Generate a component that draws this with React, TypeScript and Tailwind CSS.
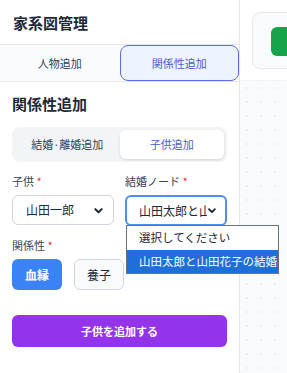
import React from "react";

const Chevron = () => (
  <svg width="11" height="11" viewBox="0 0 24 24" fill="none" stroke="#1f2937" strokeWidth="4.5" strokeLinecap="round" strokeLinejoin="round">
    <path d="M5 9l7 7 7-7" />
  </svg>
);

export default function App() {
  return (
    <div
      className="flex h-[373px] w-[287px] overflow-hidden bg-white text-gray-800"
      style={{ fontFamily: '"Noto Sans CJK JP", "Noto Sans", sans-serif' }}
    >
      <aside className="relative flex w-[240px] shrink-0 flex-col border-r border-gray-200 bg-white">
        <div className="flex h-[45px] items-center border-b border-gray-200 px-[13px]">
          <h1 className="text-[15px] font-semibold leading-none text-gray-800">家系図管理</h1>
        </div>
        <div className="grid h-[37px] grid-cols-2 border-b border-gray-200">
          <div className="flex items-center justify-center bg-gray-50 text-[11px] text-gray-700">人物追加</div>
          <div className="flex items-center justify-center rounded-lg border border-[#5b6be3] bg-[#eef4ff] text-[11px] text-[#4c5bd4]">
            関係性追加
          </div>
        </div>
        <div className="px-3">
          <h2 className="mt-[12px] text-[15px] font-semibold leading-[20px] text-gray-800">関係性追加</h2>
          <div className="mt-[13px] grid h-[35px] grid-cols-2 rounded-lg bg-gray-100 p-[3px]">
            <div className="flex items-center justify-center text-[11px] text-gray-700">結婚·離婚追加</div>
            <div className="flex items-center justify-center rounded-md bg-white text-[11px] text-[#4c5bd4] shadow-sm">
              子供追加
            </div>
          </div>
          <div className="mt-[12px] grid grid-cols-2 gap-[11px]">
            <div>
              <div className="text-[11px] leading-[14px] text-gray-700">
                子供 <span className="text-red-500">*</span>
              </div>
              <div className="mt-[7px] flex h-[30px] items-center justify-between rounded-md border border-gray-300 bg-white pl-[13px] pr-[9px] text-[12px] text-gray-800">
                <span>山田一郎</span>
                <Chevron />
              </div>
            </div>
            <div className="relative">
              <div className="text-[11px] leading-[14px] text-gray-700">
                結婚ノード <span className="text-red-500">*</span>
              </div>
              <div className="mt-[7px] flex h-[31px] items-center justify-between rounded-md border-2 border-[#4d8ef5] bg-white pl-[12px] pr-[8px] text-[12px] text-gray-800">
                <span className="w-[76px] overflow-hidden whitespace-nowrap">山田太郎と山田</span>
                <Chevron />
              </div>
              <div className="absolute left-[1px] top-[51px] z-10 w-[153px] border border-gray-500 bg-white text-[11.5px]">
                <div className="flex h-[24px] items-center pl-[12px] text-gray-800">選択してください</div>
                <div className="flex h-[23px] items-center whitespace-nowrap bg-[#1e6fd9] pl-[12px] text-white">
                  山田太郎と山田花子の結婚
                </div>
              </div>
            </div>
          </div>
          <div className="mt-[12px] text-[11px] leading-[14px] text-gray-700">
            関係性 <span className="text-red-500">*</span>
          </div>
          <div className="mt-[7px] flex gap-[12px]">
            <div className="flex h-[31px] w-[50px] items-center justify-center rounded-md bg-[#3b82f6] text-[12px] font-semibold text-white">
              血縁
            </div>
            <div className="flex h-[31px] w-[50px] items-center justify-center rounded-md border border-gray-300 bg-gray-50 text-[12px] text-gray-800">
              養子
            </div>
          </div>
          <div className="mt-[25px] flex h-[32px] items-center justify-center rounded-md bg-[#9333ea] text-[11px] font-bold text-white">
            子供を追加する
          </div>
        </div>
      </aside>
      <main className="flex flex-1 flex-col">
        <div className="h-[81px] border-b border-gray-100 bg-white pl-3 pt-[12px]">
          <div className="h-[57px] w-[80px] rounded-lg border border-gray-200 bg-gray-50 pl-[18px] pt-[14px]">
            <div className="h-[29px] w-[60px] rounded-md bg-[#16a34a]" />
          </div>
        </div>
        <div className="flex-1 bg-[#f9fafb] bg-[radial-gradient(circle,#eceef1_0.8px,transparent_1px)] bg-[size:14px_14px]" />
      </main>
    </div>
  );
}
